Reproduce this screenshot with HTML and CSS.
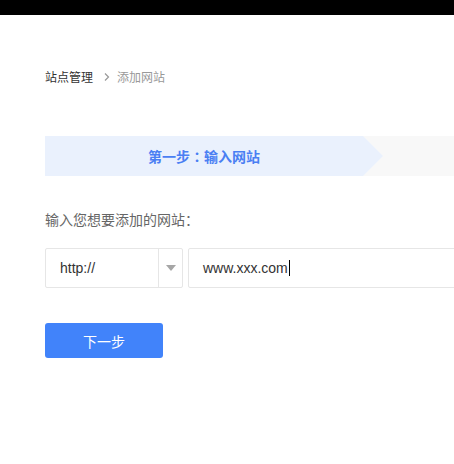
FILE: index.html
```html
<!DOCTYPE html>
<html lang="zh">
<head>
<meta charset="utf-8">
<title>添加网站</title>
<link rel="stylesheet" href="styles.css">
</head>
<body>
<div class="topbar"></div>
<main class="page">
  <nav class="crumbs">
    <span class="crumb-root">站点管理</span>
    <svg class="crumb-sep" width="8" height="10" viewBox="0 0 8 10"><path d="M2 1.5 L5.5 5 L2 8.5" fill="none" stroke="#999" stroke-width="1.2"/></svg>
    <span class="crumb-current">添加网站</span>
  </nav>

  <div class="steps">
    <div class="step active">第一步<span class="colon">：</span>输入网站</div>
    <div class="step-rest"></div>
  </div>

  <div class="label">输入您想要添加的网站<span class="colon">：</span></div>

  <div class="url-row">
    <div class="proto">
      <span class="proto-value">http://</span>
      <span class="proto-arrow"></span>
    </div>
    <div class="url-input"><span class="url-text">www.xxx.com</span><span class="caret"></span></div>
  </div>

  <button class="next-btn">下一步</button>
</main>
</body>
</html>
```

FILE: styles.css
```css
html, body {
  margin: 0;
  padding: 0;
  background: #fff;
}
body {
  font-family: "Liberation Sans", "Noto Sans CJK SC", sans-serif;
  color: #333;
  overflow: hidden;
}
.topbar {
  height: 15px;
  background: #000;
}
.page {
  padding-left: 45px;
  overflow: hidden;
}
.colon {
  font-family: "Noto Sans CJK TC", sans-serif;
}
.crumbs {
  margin-top: 52px;
  height: 20px;
  display: flex;
  align-items: center;
  font-family: "Noto Sans CJK SC", sans-serif;
  font-size: 12px;
  line-height: 20px;
}
.crumb-root {
  color: #333;
}
.crumb-sep {
  margin: 0 6px 0 10px;
}
.crumb-current {
  color: #999;
}
.steps {
  margin-top: 49px;
  display: flex;
  width: 700px;
  height: 40px;
  background: #f8f8f8;
}
.step {
  position: relative;
  flex: none;
  width: 318px;
  height: 40px;
  background: #eaf1fd;
  color: #4a7ff3;
  font-family: "Noto Sans CJK SC", sans-serif;
  font-weight: bold;
  font-size: 14px;
  display: flex;
  align-items: center;
  justify-content: center;
}
.step::after {
  content: "";
  position: absolute;
  right: -20px;
  top: 0;
  border-left: 20px solid #eaf1fd;
  border-top: 20px solid transparent;
  border-bottom: 20px solid transparent;
}
.step-rest {
  flex: 1;
}
.label {
  margin-top: 33px;
  font-family: "Noto Sans CJK SC", sans-serif;
  font-size: 14px;
  line-height: 20px;
  color: #666;
}
.url-row {
  margin-top: 19px;
  display: flex;
  gap: 5px;
  height: 40px;
  width: 700px;
}
.proto {
  flex: none;
  box-sizing: border-box;
  width: 138px;
  height: 40px;
  border: 1px solid #e6e6e6;
  border-radius: 2px;
  display: flex;
}
.proto-value {
  flex: 1;
  padding-left: 14px;
  font-size: 14px;
  line-height: 38px;
  color: #333;
  border-right: 1px solid #e6e6e6;
}
.proto-arrow {
  flex: none;
  width: 23px;
  display: flex;
  align-items: center;
  justify-content: center;
}
.proto-arrow::before {
  content: "";
  border-top: 6px solid #a6a6a6;
  border-left: 5px solid transparent;
  border-right: 5px solid transparent;
}
.url-input {
  flex: none;
  box-sizing: border-box;
  width: 400px;
  height: 40px;
  border: 1px solid #e6e6e6;
  border-radius: 2px;
  padding-left: 14px;
  display: flex;
  align-items: center;
  font-size: 14px;
  color: #333;
}
.caret {
  width: 1px;
  height: 16px;
  background: #000;
  margin-left: 1px;
}
.next-btn {
  display: block;
  margin-top: 35px;
  width: 118px;
  height: 35px;
  border: none;
  border-radius: 3px;
  background: #4183fa;
  color: #fff;
  font-family: "Noto Sans CJK SC", sans-serif;
  font-size: 14px;
  padding: 0;
}
```
